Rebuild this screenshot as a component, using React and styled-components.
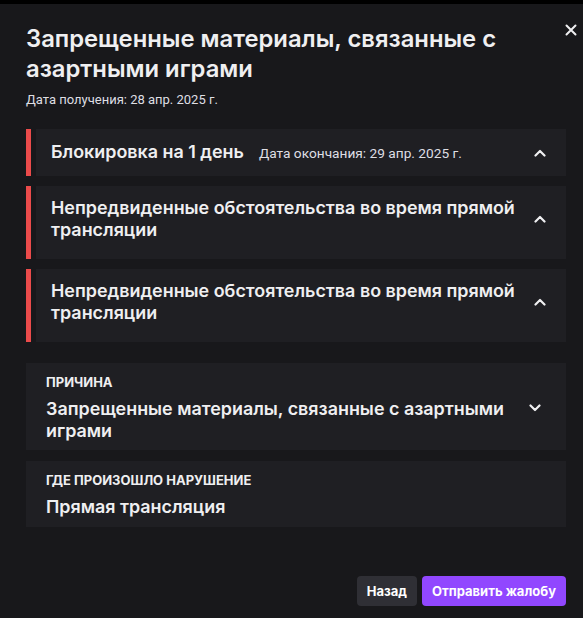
import styled, { createGlobalStyle } from "styled-components"

const Global = createGlobalStyle`
    body {
        margin: 0;
        background: #000;
        font-family: Inter, "Noto Sans", sans-serif;
        color: #efeff1;
    }
`

const Page = styled.div`
    padding-top: 4px;
    background: #000;
`

const Dialog = styled.div`
    position: relative;
    min-height: 614px;
    box-sizing: border-box;
    background: #18181b;
    padding: 20px 17px 12px 26px;
    display: flex;
    flex-direction: column;
`

const Close = styled.button`
    position: absolute;
    top: 14px;
    right: 0;
    width: 24px;
    height: 24px;
    border: 0;
    background: none;
    display: flex;
    align-items: center;
    justify-content: center;
    padding: 0;
`

const Title = styled.h1`
    margin: 0;
    font-size: 23.8px;
    line-height: 30px;
    font-weight: 600;
    max-width: 510px;
`

const Received = styled.div`
    margin-top: 7px;
    font-family: Roboto, sans-serif;
    font-size: 13px;
    line-height: 18px;
    color: #dedee3;
`

const List = styled.div`
    margin-top: 20px;
    display: flex;
    flex-direction: column;
    gap: 10px;
`

const Row = styled.div`
    display: flex;
    gap: 5px;
`

const Stripe = styled.div`
    width: 5px;
    background: #eb4b4b;
`

const Card = styled.div`
    flex: 1;
    background: #1f1f23;
    display: flex;
    align-items: center;
    gap: 12px;
    padding: ${props => props.$pad || "12px 20px 12px 15px"};
`

const Body = styled.div`
    flex: 1;
    min-width: 0;
`

const Heading = styled.div`
    font-size: 17.9px;
    line-height: 22px;
    font-weight: 600;
    display: flex;
    align-items: baseline;
    flex-wrap: wrap;
    column-gap: 15px;
`

const Ends = styled.span`
    font-family: Roboto, sans-serif;
    font-size: 13.7px;
    font-weight: 400;
    color: #dedee3;
`

const Label = styled.div`
    font-size: 13px;
    line-height: 16px;
    font-weight: 700;
    text-transform: uppercase;
    margin-bottom: 8px;
`

const Details = styled.div`
    margin-top: 21px;
    display: flex;
    flex-direction: column;
    gap: 11px;
`

const Footer = styled.div`
    margin-top: auto;
    display: flex;
    justify-content: flex-end;
    gap: 5px;
`

const Button = styled.button`
    height: 30px;
    border: 0;
    border-radius: 4px;
    padding: 0 10px;
    font-family: inherit;
    font-size: 13px;
    font-weight: 700;
    color: #fff;
    background: ${props => props.$primary ? "#9147ff" : "#2f2f35"};
`

const Chevron = ({ up }) => (
    <svg width="12" height="8" viewBox="0 0 12 8" style={{ flex: "none" }}>
        <polyline
            points={up ? "1.5,6.5 6,2 10.5,6.5" : "1.5,1.5 6,6 10.5,1.5"}
            fill="none"
            stroke="#efeff1"
            strokeWidth="2.2"
            strokeLinecap="round"
            strokeLinejoin="round"
        />
    </svg>
)

const Violation = ({ children, pad }) => (
    <Row>
        <Stripe />
        <Card $pad={pad}>
            <Body>
                <Heading>{children}</Heading>
            </Body>
            <Chevron up />
        </Card>
    </Row>
)

const App = () => {
    return (
        <Page>
            <Global />
            <Dialog>
                <Close>
                    <svg width="12" height="12" viewBox="0 0 12 12">
                        <path d="M1.5 1.5 L10.5 10.5 M10.5 1.5 L1.5 10.5" stroke="#efeff1" strokeWidth="2" strokeLinecap="round" />
                    </svg>
                </Close>
                <Title>Запрещенные материалы, связанные с азартными играми</Title>
                <Received>Дата получения: 28 апр. 2025 г.</Received>
                <List>
                    <Violation>
                        Блокировка на 1 день
                        <Ends>Дата окончания: 29 апр. 2025 г.</Ends>
                    </Violation>
                    <Violation pad="11px 20px 18px 15px">Непредвиденные обстоятельства во время прямой трансляции</Violation>
                    <Violation pad="11px 20px 18px 15px">Непредвиденные обстоятельства во время прямой трансляции</Violation>
                </List>
                <Details>
                    <Card $pad="11px 25px 8px 20px">
                        <Body>
                            <Label>Причина</Label>
                            <Heading>Запрещенные материалы, связанные с азартными играми</Heading>
                        </Body>
                        <Chevron />
                    </Card>
                    <Card $pad="11px 25px 9px 20px">
                        <Body>
                            <Label>Где произошло нарушение</Label>
                            <Heading>Прямая трансляция</Heading>
                        </Body>
                    </Card>
                </Details>
                <Footer>
                    <Button>Назад</Button>
                    <Button $primary>Отправить жалобу</Button>
                </Footer>
            </Dialog>
        </Page>
    )
}

export default App
